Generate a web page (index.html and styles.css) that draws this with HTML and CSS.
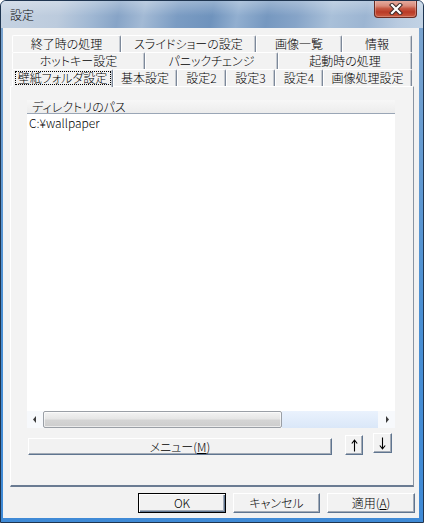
FILE: index.html
```html
<!DOCTYPE html>
<html lang="ja">
<head>
<meta charset="utf-8">
<title>設定</title>
<link rel="stylesheet" href="styles.css">
</head>
<body>
<div class="window">
  <div class="titlebar">
    <span class="title">設定</span>
    <div class="close">
      <svg width="14" height="12" viewBox="0 0 14 12">
        <path d="M3 2 L11 10 M11 2 L3 10" stroke="#3d2a2a" stroke-width="4.2" stroke-linecap="square" fill="none"/>
        <path d="M3 2 L11 10 M11 2 L3 10" stroke="#ffffff" stroke-width="2.2" stroke-linecap="square" fill="none"/>
      </svg>
    </div>
  </div>
  <div class="client">
    <div class="tabctl">
      <div class="tabrow">
        <div class="tab w109">終了時の処理</div>
        <div class="tab w135">スライドショーの設定</div>
        <div class="tab w86">画像一覧</div>
        <div class="tab w70">情報</div>
      </div>
      <div class="tabrow">
        <div class="tab w133">ホットキー設定</div>
        <div class="tab w133">パニックチェンジ</div>
        <div class="tab w134">起動時の処理</div>
      </div>
      <div class="tabrow">
        <div class="tab w101 selected"><span class="focus">壁紙フォルダ設定</span></div>
        <div class="tab w64">基本設定</div>
        <div class="tab w49">設定2</div>
        <div class="tab w49">設定3</div>
        <div class="tab w48">設定4</div>
        <div class="tab w89">画像処理設定</div>
      </div>
      <div class="panel">
        <div class="listview">
          <div class="lv-header"><span class="lv-col">ディレクトリのパス</span></div>
          <div class="lv-body">
            <div class="lv-item">C:¥wallpaper</div>
          </div>
          <div class="hscroll">
            <div class="sb-btn left">
              <svg width="4" height="7" viewBox="0 0 4 7"><path d="M3 0 L3 7 L0 3.5 Z" fill="#3c3c3c"/></svg>
            </div>
            <div class="sb-thumb"></div>
            <div class="sb-track"></div>
            <div class="sb-btn right">
              <svg width="4" height="7" viewBox="0 0 4 7"><path d="M1 0 L1 7 L4 3.5 Z" fill="#3c3c3c"/></svg>
            </div>
          </div>
        </div>
        <div class="toolrow">
          <button class="btn menu-btn">メニュー(<u>M</u>)</button>
          <button class="btn arrow-btn up-btn">
            <svg width="7" height="13" viewBox="0 0 7 13"><path d="M3.5 1.5 L3.5 12.5 M0.8 4.5 L3.5 1.2 L6.2 4.5" stroke="#000" stroke-width="1.1" fill="none"/></svg>
          </button>
          <button class="btn arrow-btn down-btn">
            <svg width="7" height="13" viewBox="0 0 7 13"><path d="M3.5 0.5 L3.5 11.5 M0.8 8.5 L3.5 11.8 L6.2 8.5" stroke="#000" stroke-width="1.1" fill="none"/></svg>
          </button>
        </div>
      </div>
    </div>
    <div class="dlg-buttons">
      <button class="btn dlg default w88">OK</button>
      <button class="btn dlg w87">キャンセル</button>
      <button class="btn dlg w88">適用(<u>A</u>)</button>
    </div>
  </div>
</div>
</body>
</html>
```

FILE: styles.css
```css
* { box-sizing: border-box; }
html, body { margin: 0; padding: 0; }
body {
  width: 424px;
  height: 523px;
  overflow: hidden;
  font-family: "Noto Sans CJK JP", "Noto Sans", sans-serif;
  font-size: 12px;
  font-weight: 300;
  font-feature-settings: "palt";
  color: #000;
  background: #ffffff;
}

.window {
  width: 424px;
  height: 523px;
  display: flex;
  flex-direction: column;
  background: linear-gradient(to bottom, #7fa6cf, #4a8fd3 60%, #3f8ad6);
  border: 1px solid #1f3550;
  border-radius: 6px 6px 0 0;
  overflow: hidden;
}

.titlebar {
  flex: none;
  height: 27px;
  position: relative;
  display: flex;
  align-items: center;
  padding-left: 9px;
  background:
    linear-gradient(to bottom, rgba(255,255,255,0.28), rgba(255,255,255,0) 55%),
    linear-gradient(100deg, #c6d3e2 0%, #bccbdd 14%, #9fb7d3 22%, #87a4c7 28%, #a3bad5 34%, #7b9cc3 42%, #6f93bd 50%, #92afd0 56%, #7698c0 63%, #86a4c8 70%, #a9c0d9 78%, #9cb5d2 86%, #b9cbe0 94%, #c2d3e5 100%);
}
.title {
  font-size: 12px;
  line-height: 14px;
  color: #0a0a0a;
}
.close {
  position: absolute;
  top: -1px;
  right: 6px;
  width: 43px;
  height: 18px;
  display: flex;
  align-items: center;
  justify-content: center;
  border: 1px solid #6a2b22;
  border-top: none;
  border-radius: 0 0 4px 4px;
  background: linear-gradient(to bottom, #e7b1a5 0%, #d98a7a 35%, #c65843 50%, #b93a26 70%, #c95a40 100%);
  box-shadow: inset 0 0 0 1px rgba(255,255,255,0.25);
}

.client {
  flex: 1;
  margin: 0 4px 4px 2px;
  background: #f2f2f2;
  display: flex;
  flex-direction: column;
}

.tabctl {
  margin: 7px 0 0 7px;
  width: 404px;
}
.tabrow {
  display: flex;
  height: 17px;
  padding-left: 2px;
}
.tab {
  flex: none;
  height: 17px;
  display: flex;
  align-items: center;
  justify-content: center;
  border-top: 1px solid #ffffff;
  border-left: 1px solid #ffffff;
  border-right: 1px solid #7d899a;
  box-shadow: inset -1px 0 0 #c4c9d0;
  border-radius: 2px 2px 0 0;
  line-height: 14px;
  white-space: nowrap;
  background: #f2f2f2;
}
.tab.selected {
  position: relative;
  z-index: 1;
  height: 18px;
  margin-bottom: -1px;
  padding-bottom: 1px;
}
.focus {
  display: block;
  width: 96px;
  height: 14px;
  line-height: 13px;
  text-align: center;
  outline: 1px dotted #000;
  outline-offset: -1px;
}
.w48 { width: 48px; }
.w49 { width: 49px; }
.w64 { width: 64px; }
.w70 { width: 70px; }
.w86 { width: 86px; }
.w87 { width: 87px; }
.w88 { width: 88px; }
.w89 { width: 89px; }
.w101 { width: 101px; }
.w109 { width: 109px; }
.w133 { width: 133px; }
.w134 { width: 134px; }
.w135 { width: 135px; }

.panel {
  height: 401px;
  border-top: 1px solid #ffffff;
  border-left: 1px solid #ffffff;
  border-right: 1px solid #8a94a2;
  border-bottom: 2px solid #6a7b92;
  padding: 13px 0 0 16px;
  background: #f3f3f3;
}

.listview {
  width: 368px;
  height: 328px;
  display: flex;
  flex-direction: column;
  background: #ffffff;
}
.lv-header {
  flex: none;
  height: 14px;
  background: linear-gradient(to bottom, #f7f7f7, #ececec);
  border-bottom: 1px solid #9aa6b6;
  display: flex;
  align-items: center;
}
.lv-col {
  padding-left: 5px;
  line-height: 13px;
}
.lv-body {
  flex: 1;
  padding: 2px 0 0 2px;
}
.lv-item {
  line-height: 14px;
}

.hscroll {
  flex: none;
  height: 17px;
  display: flex;
}
.sb-btn {
  flex: none;
  display: flex;
  align-items: center;
  justify-content: center;
  background: #f7f9fc;
}
.sb-btn.left { width: 16px; }
.sb-btn.right { width: 17px; }
.sb-thumb {
  flex: none;
  width: 239px;
  border: 1px solid #9a9fa6;
  border-radius: 2px;
  background: linear-gradient(to bottom, #f3f3f3 0%, #e6e6e6 45%, #d4d4d4 55%, #cdcdcd 100%);
  box-shadow: inset 0 0 0 1px rgba(255,255,255,0.6);
}
.sb-track {
  flex: 1;
  background: linear-gradient(to bottom, #eaf2fd, #dae7f8);
}

.toolrow {
  display: flex;
  align-items: flex-start;
  margin-top: 5px;
}

.btn {
  font: inherit;
  font-size: 12px;
  color: #000;
  padding: 0;
  margin: 0;
  background: #f2f2f2;
  border: 1px solid;
  border-color: #ffffff #5f7590 #5f7590 #ffffff;
  box-shadow: inset -1px -1px 0 #a3abb6;
  display: flex;
  align-items: center;
  justify-content: center;
  line-height: 14px;
}
.btn u { text-decoration: underline; }

.menu-btn {
  width: 304px;
  height: 17px;
  margin: 5px 0 0 1px;
}
.arrow-btn {
  width: 18px;
  height: 20px;
}
.up-btn { margin: 2px 0 0 13px; }
.down-btn { width: 19px; margin: 0 0 0 10px; }

.dlg-buttons {
  display: flex;
  justify-content: flex-end;
  gap: 7px;
  margin-top: 6px;
  padding-right: 4px;
}
.dlg {
  height: 20px;
}
.dlg.default {
  border: 1px solid #000;
  box-shadow: inset 1px 1px 0 #ffffff, inset -1px -1px 0 #5f7590, inset -2px -2px 0 #a3abb6;
}
```
